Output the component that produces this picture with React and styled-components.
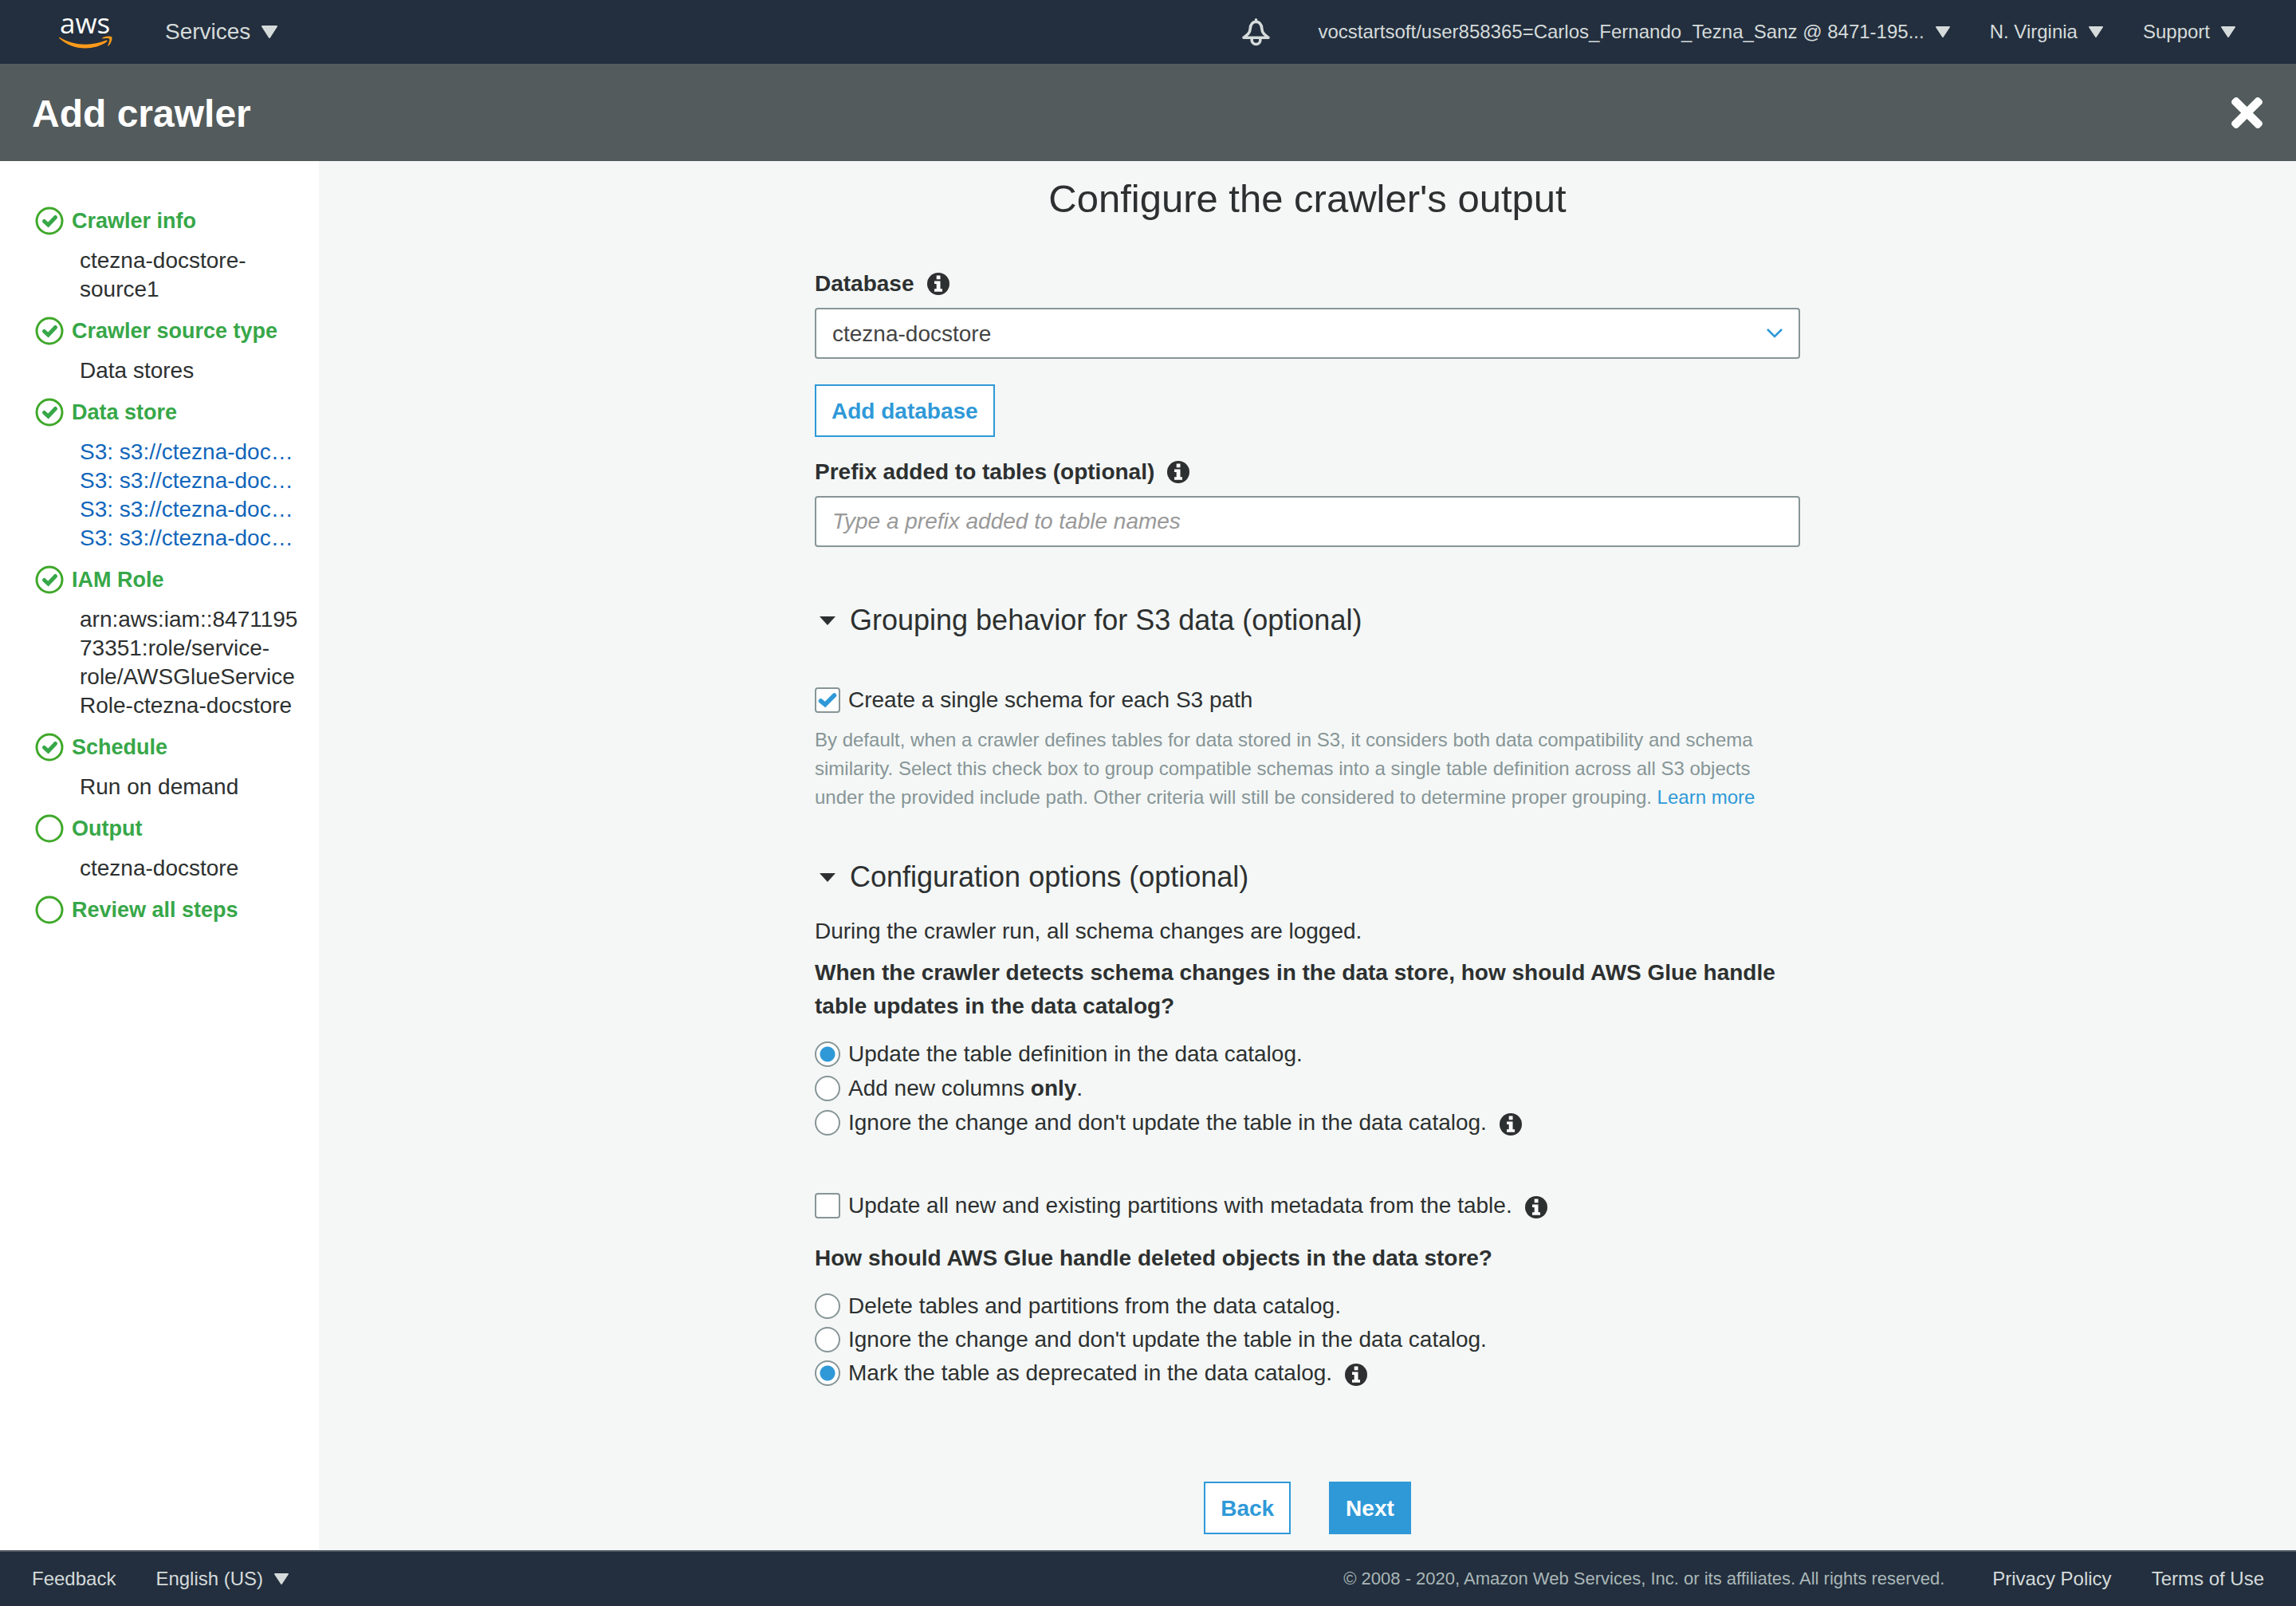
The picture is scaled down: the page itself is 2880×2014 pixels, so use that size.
import React from "react";
import styled, { createGlobalStyle, css } from "styled-components";

const c = {
  navy: "#232f3e",
  slate: "#535b5c",
  page: "#f4f7f6",
  ink: "#2d3030",
  muted: "#879596",
  blue: "#2f99d8",
  link: "#1166bb",
  green: "#37a748",
  ring: "#3fa82a",
  pale: "#d5dbdb",
};

const GlobalStyle = createGlobalStyle`
  *, *::before, *::after { box-sizing: border-box; }
  body {
    margin: 0;
    font-family: "Liberation Sans", Arial, sans-serif;
    font-size: 28px;
    color: ${c.ink};
    background: ${c.page};
  }
  button, input, select { font: inherit; color: inherit; margin: 0; }
  a { text-decoration: none; }
  svg { display: block; flex: none; }
`;

const Page = styled.div`
  min-height: 100vh;
  display: flex;
  flex-direction: column;
`;

const TopBar = styled.header`
  display: flex;
  align-items: center;
  justify-content: space-between;
  height: 80px;
  padding: 0 76px 0 74px;
  background: ${c.navy};
`;

const BarGroup = styled.div`
  display: flex;
  align-items: center;
  gap: ${(p) => p.$gap}px;
`;

const BarButton = styled.button`
  display: flex;
  align-items: center;
  gap: 14px;
  padding: 0;
  border: 0;
  background: none;
  color: ${c.pale};
  font-size: ${(p) => p.$size || 24}px;
  white-space: nowrap;
`;

const TitleBar = styled.div`
  display: flex;
  align-items: center;
  justify-content: space-between;
  height: 122px;
  padding: 0 42px 0 40px;
  background: ${c.slate};
  color: #fff;
`;

const PageName = styled.h1`
  margin: 0;
  padding-top: 4px;
  font-size: 48px;
  line-height: 56px;
`;

const CloseButton = styled.button`
  padding: 0;
  border: 0;
  background: none;
  color: #fff;
`;

const Body = styled.div`
  flex: 1;
  display: flex;
`;

const Sidebar = styled.nav`
  flex: none;
  width: 400px;
  padding: 57px 20px 40px 44px;
  background: #fff;
`;

const StepList = styled.ol`
  display: flex;
  flex-direction: column;
  gap: 16px;
  margin: 0;
  padding: 0;
  list-style: none;
`;

const StepLink = styled.a`
  display: flex;
  align-items: center;
  gap: 10px;
  color: ${c.green};
  font-size: 27px;
  font-weight: bold;
  line-height: 36px;
`;

const StepDetail = styled.div`
  margin: 14px 0 0 56px;
  line-height: 36px;
  overflow-wrap: anywhere;
`;

const PathLink = styled.a`
  display: block;
  color: ${c.link};
  white-space: nowrap;
`;

const Main = styled.main`
  flex: 1;
  display: flex;
  justify-content: center;
  padding: 17px 40px 20px;
`;

const Form = styled.form`
  width: 100%;
  max-width: 1236px;
`;

const FormTitle = styled.h2`
  margin: 0 0 59px;
  font-size: 49px;
  font-weight: normal;
  line-height: 60px;
  text-align: center;
`;

const Field = styled.div`
  margin-bottom: ${(p) => p.$after}px;
`;

const LabelRow = styled.div`
  display: flex;
  align-items: center;
  gap: 16px;
  margin-bottom: 12px;
  font-weight: bold;
  line-height: 36px;
`;

const control = css`
  width: 100%;
  height: 64px;
  padding: 0 20px;
  border: 2px solid ${c.muted};
  border-radius: 4px;
  background: #fff;
  color: #444;
`;

const SelectBox = styled.div`
  display: grid;
  align-items: center;
  > * { grid-area: 1 / 1; }
  > svg { justify-self: end; margin-right: 22px; pointer-events: none; }
`;

const Select = styled.select`
  ${control}
  appearance: none;
`;

const TextInput = styled.input`
  ${control}
  &::placeholder { color: #999; font-style: italic; opacity: 1; }
`;

const Button = styled.button`
  height: 66px;
  padding: 2px 19px 0;
  border: 2px solid ${c.blue};
  background: ${(p) => (p.$primary ? c.blue : "#fff")};
  color: ${(p) => (p.$primary ? "#fff" : c.blue)};
  font-weight: bold;
`;

const SectionToggle = styled.button`
  display: flex;
  align-items: center;
  gap: 18px;
  padding: 0 0 0 6px;
  border: 0;
  background: none;
  font-size: 36px;
  line-height: 44px;
`;

const Section = styled.section`
  margin-top: ${(p) => p.$before}px;
`;

const OptionGroup = styled.div`
  display: flex;
  flex-direction: column;
  gap: ${(p) => p.$gap || 0}px;
  margin-top: ${(p) => p.$before}px;
`;

const OptionRow = styled.div`
  display: flex;
  align-items: center;
  gap: 16px;
  line-height: 42px;
  > svg { margin-top: 4px; }
`;

const OptionLabel = styled.label`
  display: flex;
  align-items: center;
  gap: 10px;
`;

const Mark = styled.span`
  display: grid;
  place-items: center;
  color: ${c.blue};
  > * { grid-area: 1 / 1; }
  > svg { pointer-events: none; }
`;

const mark = css`
  appearance: none;
  width: 32px;
  height: 32px;
  border: 2px solid ${c.muted};
  background: #fff;
`;

const CheckInput = styled.input`
  ${mark}
  border-radius: 4px;
`;

const RadioInput = styled.input`
  ${mark}
  border-radius: 50%;
  &:checked {
    background: radial-gradient(circle, ${c.blue} 9px, #fff 10px);
  }
`;

const Help = styled.p`
  margin: 11px 0 0;
  padding-right: 40px;
  color: ${c.muted};
  font-size: 24px;
  line-height: 36px;
  a { color: ${c.blue}; }
`;

const Note = styled.p`
  margin: 25px 0 0;
  line-height: 42px;
`;

const Question = styled.h3`
  margin: ${(p) => p.$before}px 0 0;
  font-size: 28px;
  font-weight: bold;
  line-height: 42px;
`;

const Actions = styled.div`
  display: flex;
  justify-content: center;
  gap: 48px;
  margin-top: 115px;
`;

const Footer = styled.footer`
  display: flex;
  align-items: center;
  justify-content: space-between;
  height: 70px;
  padding: 0 40px;
  border-top: 2px solid #545b64;
  background: ${c.navy};
`;

const FooterLink = styled.a`
  color: ${c.pale};
  font-size: 24px;
`;

const Copyright = styled.span`
  margin-right: 10px;
  color: #aab7b8;
  font-size: 22px;
`;

const AwsLogo = () => (
  <svg width="67" height="70" viewBox="0 -12 67 70" role="img" aria-label="aws">
    <text x="1" y="25" fill="#fff" fontFamily="Open Sans, Noto Sans, sans-serif" fontSize="35" fontWeight="500">aws</text>
    <g fill="#ff9a1a" transform="translate(0 -9.7) scale(2.77)">
      <path d="M21.698 16.207c-2.626 1.94-6.442 2.969-9.722 2.969-4.598 0-8.74-1.7-11.87-4.526-.247-.223-.024-.527.272-.351 3.384 1.963 7.559 3.153 11.877 3.153 2.914 0 6.114-.607 9.06-1.852.439-.2.814.287.383.607z" />
      <path d="M22.792 14.961c-.336-.43-2.22-.207-3.074-.103-.255.032-.295-.192-.063-.36 1.5-1.053 3.967-.75 4.254-.399.287.36-.08 2.826-1.485 4.007-.215.184-.423.088-.327-.151.32-.79 1.03-2.57.695-2.994z" />
    </g>
  </svg>
);

const Bell = () => (
  <svg width="35" height="35" viewBox="0 0 35 35" fill="none" stroke="currentColor" strokeWidth="3.6" strokeLinejoin="round" strokeLinecap="round">
    <path d="M17.5 1.8v2M17.5 4.200C12.500 4.500 10.500 8.500 10.200 13C9.900 18 7.500 20 2 24.200h31C27.500 20 25.100 18 24.800 13C24.500 8.500 22.500 4.500 17.500 4.200z" />
    <path d="M12.200 25v2.500a5.300 5 0 0 0 10.600 0V25" />
  </svg>
);

const Caret = ({ w = 18, h = 14 }) => (
  <svg width={w} height={h} viewBox="0 0 20 16" preserveAspectRatio="none" fill="currentColor" stroke="currentColor" strokeWidth="2" strokeLinejoin="round">
    <path d="M1 1h18L10 15z" />
  </svg>
);

const Disclosure = () => (
  <svg width="20" height="11" viewBox="0 0 20 11" fill="currentColor">
    <path d="M0 0h20L10 11z" />
  </svg>
);

const Cross = () => (
  <svg width="39" height="39" viewBox="0 80 352 352" fill="currentColor">
    <path d="M242.72 256l100.07-100.07c12.28-12.28 12.28-32.19 0-44.48l-22.24-22.24c-12.28-12.28-32.19-12.28-44.48 0L176 189.28 75.93 89.21c-12.28-12.28-32.19-12.28-44.48 0L9.21 111.45c-12.28 12.28-12.28 32.19 0 44.48L109.28 256 9.21 356.07c-12.28 12.28-12.28 32.19 0 44.48l22.24 22.24c12.28 12.28 32.2 12.28 44.48 0L176 322.72l100.07 100.07c12.28 12.28 32.2 12.28 44.48 0l22.24-22.24c12.28-12.28 12.28-32.19 0-44.48L242.72 256z" />
  </svg>
);

const Tick = () => (
  <svg width="24" height="20" viewBox="0 0 24 20" fill="none" stroke="currentColor" strokeWidth="5.500" strokeLinecap="round" strokeLinejoin="miter">
    <path d="M3.500 11l5.500 4.500L20.500 4" />
  </svg>
);

const Chevron = () => (
  <svg width="20" height="12" viewBox="0 0 20 12" fill="none" stroke={c.blue} strokeWidth="2.600">
    <path d="M1 1l9 9 9-9" />
  </svg>
);

const StepIcon = ({ done }) => (
  <svg width="36" height="36" viewBox="0 0 36 36" fill="none">
    <circle cx="18" cy="18" r="16" stroke={c.ring} strokeWidth="3" />
    {done && <path d="M11.500 18.500l5 4.500 9-9.500" stroke={c.green} strokeWidth="5" strokeLinecap="round" />}
  </svg>
);

const Info = () => (
  <svg width="28" height="28" viewBox="0 0 28 28" role="img" aria-label="More information">
    <circle cx="14" cy="14" r="14" fill={c.ink} />
    <path fill="#fff" d="M11.700 3.500h4.800v4.700h-4.800zM9 10.500h7.500v9.700h2.500v3.600H9v-3.600h2.700v-6.200H9z" />
  </svg>
);

const BarMenu = ({ children, size }) => (
  <BarButton type="button" $size={size}>
    {children}
    {size === 28 ? <Caret w={20} h={16} /> : <Caret />}
  </BarButton>
);

const steps = [
  { name: "Crawler info", done: true, detail: "ctezna-docstore-source1" },
  { name: "Crawler source type", done: true, detail: "Data stores" },
  { name: "Data store", done: true, paths: Array(4).fill("S3: s3://ctezna-doc…") },
  { name: "IAM Role", done: true, detail: "arn:aws:iam::847119573351:role/service-role/AWSGlueServiceRole-ctezna-docstore" },
  { name: "Schedule", done: true, detail: "Run on demand" },
  { name: "Output", detail: "ctezna-docstore" },
  { name: "Review all steps" },
];

const Radio = ({ name, checked, info, children }) => (
  <OptionRow>
    <OptionLabel>
      <RadioInput type="radio" name={name} defaultChecked={checked} />
      <span>{children}</span>
    </OptionLabel>
    {info && <Info />}
  </OptionRow>
);

const Checkbox = ({ initial = false, info, children }) => {
  const [on, setOn] = React.useState(initial);
  return (
    <OptionRow>
      <OptionLabel>
        <Mark>
          <CheckInput type="checkbox" checked={on} onChange={(e) => setOn(e.target.checked)} />
          {on && <Tick />}
        </Mark>
        <span>{children}</span>
      </OptionLabel>
      {info && <Info />}
    </OptionRow>
  );
};

export default function App() {
  return (
    <Page>
      <GlobalStyle />
      <TopBar>
        <BarGroup $gap={66}>
          <AwsLogo />
          <BarMenu size={28}>Services</BarMenu>
        </BarGroup>
        <BarGroup $gap={60}>
          <BarButton type="button" aria-label="Notifications"><Bell /></BarButton>
          <BarGroup $gap={50}>
            <BarMenu>vocstartsoft/user858365=Carlos_Fernando_Tezna_Sanz @ 8471-195...</BarMenu>
            <BarMenu>N. Virginia</BarMenu>
            <BarMenu>Support</BarMenu>
          </BarGroup>
        </BarGroup>
      </TopBar>
      <TitleBar>
        <PageName>Add crawler</PageName>
        <CloseButton type="button" aria-label="Close"><Cross /></CloseButton>
      </TitleBar>
      <Body>
        <Sidebar>
          <StepList>
            {steps.map((s) => (
              <li key={s.name}>
                <StepLink href="#"><StepIcon done={s.done} />{s.name}</StepLink>
                {s.detail && <StepDetail>{s.detail}</StepDetail>}
                {s.paths && (
                  <StepDetail>
                    {s.paths.map((p, i) => <PathLink href="#" key={i}>{p}</PathLink>)}
                  </StepDetail>
                )}
              </li>
            ))}
          </StepList>
        </Sidebar>
        <Main>
          <Form onSubmit={(e) => e.preventDefault()}>
            <FormTitle>Configure the crawler's output</FormTitle>
            <Field $after={32}>
              <LabelRow><label htmlFor="database">Database</label><Info /></LabelRow>
              <SelectBox>
                <Select id="database"><option>ctezna-docstore</option></Select>
                <Chevron />
              </SelectBox>
            </Field>
            <Field $after={26}>
              <Button type="button">Add database</Button>
            </Field>
            <Field $after={0}>
              <LabelRow><label htmlFor="prefix">Prefix added to tables (optional)</label><Info /></LabelRow>
              <TextInput id="prefix" type="text" placeholder="Type a prefix added to table names" />
            </Field>
            <Section $before={70}>
              <SectionToggle type="button" aria-expanded="true"><Disclosure />Grouping behavior for S3 data (optional)</SectionToggle>
              <OptionGroup $before={57}>
                <Checkbox initial>Create a single schema for each S3 path</Checkbox>
              </OptionGroup>
              <Help>
                By default, when a crawler defines tables for data stored in S3, it considers both data compatibility and schema similarity. Select this check box to group compatible schemas into a single table definition across all S3 objects under the provided include path. Other criteria will still be considered to determine proper grouping. <a href="#">Learn more</a>
              </Help>
            </Section>
            <Section $before={60}>
              <SectionToggle type="button" aria-expanded="true"><Disclosure />Configuration options (optional)</SectionToggle>
              <Note>During the crawler run, all schema changes are logged.</Note>
              <Question $before={10}>When the crawler detects schema changes in the data store, how should AWS Glue handle table updates in the data catalog?</Question>
              <OptionGroup $before={18} $gap={1}>
                <Radio name="changes" checked>Update the table definition in the data catalog.</Radio>
                <Radio name="changes">Add new columns <b>only</b>.</Radio>
                <Radio name="changes" info>Ignore the change and don't update the table in the data catalog.</Radio>
              </OptionGroup>
              <OptionGroup $before={62}>
                <Checkbox info>Update all new and existing partitions with metadata from the table.</Checkbox>
              </OptionGroup>
              <Question $before={24}>How should AWS Glue handle deleted objects in the data store?</Question>
              <OptionGroup $before={18}>
                <Radio name="deleted">Delete tables and partitions from the data catalog.</Radio>
                <Radio name="deleted">Ignore the change and don't update the table in the data catalog.</Radio>
                <Radio name="deleted" checked info>Mark the table as deprecated in the data catalog.</Radio>
              </OptionGroup>
            </Section>
            <Actions>
              <Button type="button">Back</Button>
              <Button type="submit" $primary>Next</Button>
            </Actions>
          </Form>
        </Main>
      </Body>
      <Footer>
        <BarGroup $gap={50}>
          <FooterLink href="#">Feedback</FooterLink>
          <BarMenu>English (US)</BarMenu>
        </BarGroup>
        <BarGroup $gap={50}>
          <Copyright>© 2008 - 2020, Amazon Web Services, Inc. or its affiliates. All rights reserved.</Copyright>
          <FooterLink href="#">Privacy Policy</FooterLink>
          <FooterLink href="#">Terms of Use</FooterLink>
        </BarGroup>
      </Footer>
    </Page>
  );
}
